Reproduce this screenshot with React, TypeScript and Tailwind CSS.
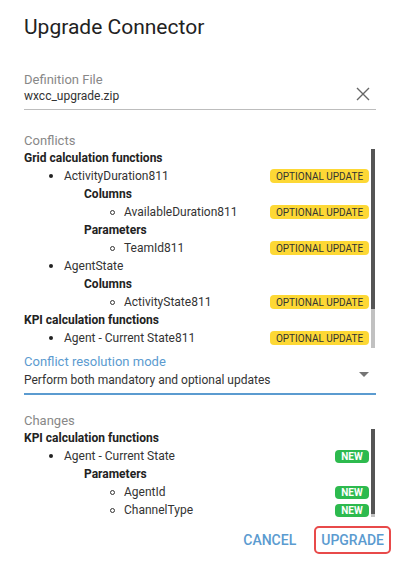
import React from "react";

type Item = {
  text: string;
  kind: "group" | "item" | "sub" | "leaf";
  badge?: "optional" | "new";
};

const conflicts: Item[] = [
  { text: "Grid calculation functions", kind: "group" },
  { text: "ActivityDuration811", kind: "item", badge: "optional" },
  { text: "Columns", kind: "sub" },
  { text: "AvailableDuration811", kind: "leaf", badge: "optional" },
  { text: "Parameters", kind: "sub" },
  { text: "TeamId811", kind: "leaf", badge: "optional" },
  { text: "AgentState", kind: "item" },
  { text: "Columns", kind: "sub" },
  { text: "ActivityState811", kind: "leaf", badge: "optional" },
  { text: "KPI calculation functions", kind: "group" },
  { text: "Agent - Current State811", kind: "item", badge: "optional" },
];

const changes: Item[] = [
  { text: "KPI calculation functions", kind: "group" },
  { text: "Agent - Current State", kind: "item", badge: "new" },
  { text: "Parameters", kind: "sub" },
  { text: "AgentId", kind: "leaf", badge: "new" },
  { text: "ChannelType", kind: "leaf", badge: "new" },
];

function Badge({ type }: { type: "optional" | "new" }) {
  if (type === "new") {
    return (
      <span className="flex h-[13px] w-[34px] items-center justify-center rounded-[4px] bg-[#2dba4e] text-[10px] font-bold text-white">
        NEW
      </span>
    );
  }
  return (
    <span className="flex h-[14px] w-[99px] items-center justify-center rounded-[4px] bg-[#fdd835] text-[10px] text-[#333]">
      OPTIONAL UPDATE
    </span>
  );
}

function Row({ item }: { item: Item }) {
  return (
    <div className="flex h-[18px] items-center">
      {item.kind === "group" && <span className="font-bold text-[#222]">{item.text}</span>}
      {item.kind === "sub" && <span className="pl-[60px] font-bold text-[#222]">{item.text}</span>}
      {item.kind === "item" && (
        <div className="flex items-center pl-[25px] text-[#333]">
          <span className="h-[4px] w-[4px] rounded-full bg-[#222]" />
          <span className="pl-[11px]">{item.text}</span>
        </div>
      )}
      {item.kind === "leaf" && (
        <div className="flex items-center pl-[86px] text-[#333]">
          <span className="h-[5px] w-[5px] rounded-full border border-[#333]" />
          <span className="pl-[9px]">{item.text}</span>
        </div>
      )}
      <div className="ml-auto">{item.badge && <Badge type={item.badge} />}</div>
    </div>
  );
}

function ScrollList({
  items,
  height,
  thumbHeight,
}: {
  items: Item[];
  height: number;
  thumbHeight: number;
}) {
  return (
    <div className="flex overflow-hidden" style={{ height }}>
      <div className="flex-1 pr-[2px]">
        {items.map((it, i) => (
          <Row key={i} item={it} />
        ))}
      </div>
      <div className="flex w-[4px] flex-col bg-[#c1c1c1]">
        <div className="w-[4px] bg-[#555]" style={{ height: thumbHeight }} />
      </div>
      <div className="w-[1px]" />
    </div>
  );
}

export default function App() {
  return (
    <div className="h-[568px] w-[400px] bg-white px-6 font-['Roboto',sans-serif] text-[12px]">
      <h1 className="pt-[14px] text-[21px] font-normal leading-[27px] text-[#222]">Upgrade Connector</h1>

      {/* definition file */}
      <div className="mt-[30px] flex items-end border-b border-[#bdbdbd] pb-[5px]">
        <div className="flex-1">
          <div className="text-[13px] leading-[17px] text-[#888]">Definition File</div>
          <div className="leading-[16px] text-[#333]">wxcc_upgrade.zip</div>
        </div>
        <svg width="14" height="14" viewBox="0 0 14 14" className="mb-[3px] mr-[6px]">
          <path d="M1 1 L13 13 M13 1 L1 13" stroke="#666" strokeWidth="1.4" />
        </svg>
      </div>

      {/* conflicts */}
      <div className="mt-[23px] text-[13px] leading-[16px] text-[#888]">Conflicts</div>
      <ScrollList items={conflicts} height={199} thumbHeight={160} />

      {/* conflict resolution mode */}
      <div className="mt-[5px] flex items-end border-b-2 border-[#5b9bd0] pb-[4px]">
        <div className="flex-1">
          <div className="text-[13px] leading-[18px] text-[#5b9bd0]">Conflict resolution mode</div>
          <div className="leading-[18px] text-[#333]">Perform both mandatory and optional updates</div>
        </div>
        <svg width="10" height="5" viewBox="0 0 10 5" className="mb-[12px] mr-[7px]">
          <path d="M0 0 L10 0 L5 5 Z" fill="#757575" />
        </svg>
      </div>

      {/* changes */}
      <div className="mt-[18px] text-[13px] leading-[16px] text-[#888]">Changes</div>
      <ScrollList items={changes} height={88} thumbHeight={85} />

      <div className="-mr-[15px] mt-[9px] flex items-center justify-end gap-[18px]">
        <button className="text-[14px] font-medium text-[#5b9bd0]">CANCEL</button>
        <button className="h-[28px] rounded-[5px] border-2 border-[#e84a4a] px-[5px] text-[14px] font-medium text-[#5b9bd0]">
          UPGRADE
        </button>
      </div>
    </div>
  );
}
